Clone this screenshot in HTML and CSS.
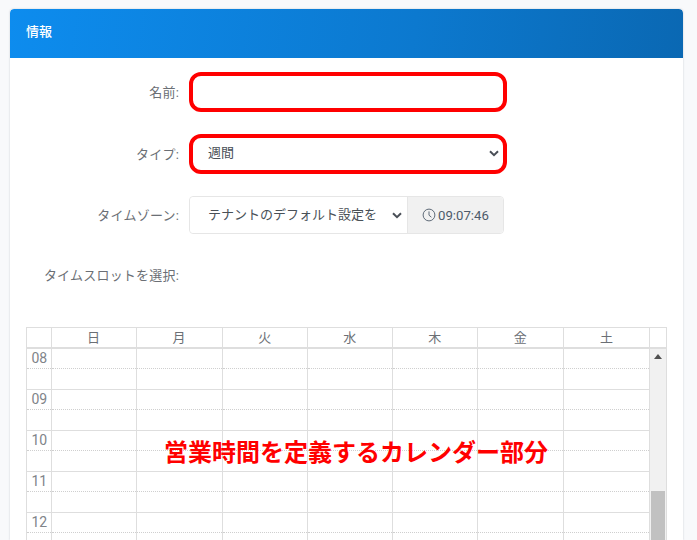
FILE: index.html
```html
<!DOCTYPE html>
<html lang="ja">
<head>
<meta charset="utf-8">
<title>情報</title>
<link rel="stylesheet" href="styles.css">
</head>
<body>
<section class="card">
  <header class="card-head">情報</header>
  <div class="card-body">
    <div class="form-row row-name">
      <label class="form-label">名前:</label>
      <input class="field field-hl" type="text">
    </div>
    <div class="form-row row-type">
      <label class="form-label">タイプ:</label>
      <select class="field field-hl"><option>週間</option></select>
    </div>
    <div class="form-row row-zone">
      <label class="form-label">タイムゾーン:</label>
      <div class="zone-group">
        <select class="zone-select"><option>テナントのデフォルト設定を</option></select>
        <span class="zone-time">
          <svg class="clock" viewBox="0 0 14 14" width="14" height="14"><circle cx="7" cy="7" r="5.9" fill="none" stroke="#5f6b78" stroke-width="1"/><path d="M7 3.4V7.2L9.4 9.2" fill="none" stroke="#5f6b78" stroke-width="1"/></svg>
          09:07:46
        </span>
      </div>
    </div>
    <div class="form-row row-slot">
      <label class="form-label">タイムスロットを選択:</label>
    </div>
    <div class="calendar">
      <div class="cal-head">
        <table class="cal-table">
          <tr><th class="axis"></th><th>日</th><th>月</th><th>火</th><th>水</th><th>木</th><th>金</th><th>土</th></tr>
        </table>
        <div class="head-gutter"></div>
      </div>
      <div class="cal-main">
        <table class="cal-table cal-slots">
          <tr class="half first"><td class="axis">08</td><td></td><td></td><td></td><td></td><td></td><td></td><td></td></tr>
          <tr class="half second"><td class="axis"></td><td></td><td></td><td></td><td></td><td></td><td></td><td></td></tr>
          <tr class="half"><td class="axis">09</td><td></td><td></td><td></td><td></td><td></td><td></td><td></td></tr>
          <tr class="half second"><td class="axis"></td><td></td><td></td><td></td><td></td><td></td><td></td><td></td></tr>
          <tr class="half"><td class="axis">10</td><td></td><td></td><td></td><td></td><td></td><td></td><td></td></tr>
          <tr class="half second"><td class="axis"></td><td></td><td></td><td></td><td></td><td></td><td></td><td></td></tr>
          <tr class="half"><td class="axis">11</td><td></td><td></td><td></td><td></td><td></td><td></td><td></td></tr>
          <tr class="half second"><td class="axis"></td><td></td><td></td><td></td><td></td><td></td><td></td><td></td></tr>
          <tr class="half"><td class="axis">12</td><td></td><td></td><td></td><td></td><td></td><td></td><td></td></tr>
          <tr class="half second"><td class="axis"></td><td></td><td></td><td></td><td></td><td></td><td></td><td></td></tr>
        </table>
        <div class="scrollbar">
          <span class="scroll-up"></span>
          <span class="scroll-thumb"></span>
        </div>
        <div class="cal-note">営業時間を定義するカレンダー部分</div>
      </div>
    </div>
  </div>
</section>
</body>
</html>
```
FILE: styles.css
```css
* { box-sizing: border-box; }
html, body { height: 540px; overflow: hidden; }
body {
  margin: 0;
  padding: 9px 14px 0 10px;
  background: #f8f9fb;
  font-family: Roboto, "Noto Sans CJK JP", sans-serif;
  font-size: 13px;
  color: #6b6f75;
}
.card {
  background: #fff;
  border-radius: 4px 4px 0 0;
  box-shadow: 0 0 2px rgba(60, 70, 90, .28);
  height: 531px;
  overflow: hidden;
}
.card-head {
  height: 49px;
  padding: 0 16px;
  line-height: 46px;
  color: #fff;
  font-weight: 500;
  border-radius: 4px 4px 0 0;
  background: linear-gradient(97deg, #0d8cee 0%, #0c79cf 60%, #0a68b3 100%);
}
.card-body { padding: 0 16px; }
.form-row {
  display: flex;
  align-items: center;
  gap: 10px;
}
.row-name { padding-top: 14px; }
.row-type { padding-top: 22px; }
.row-zone { padding-top: 22px; }
.row-slot { padding-top: 32px; height: 93px; align-items: flex-start; }
.form-label {
  width: 153px;
  text-align: right;
  flex: none;
  position: relative;
  top: -1px;
  letter-spacing: .2px;
}
.row-slot .form-label { line-height: 20px; top: 0; }
.field {
  width: 318px;
  background: #fff;
  font: inherit;
  color: #495057;
  outline: none;
}
.field-hl {
  height: 40px;
  border: 4px solid #f00;
  border-radius: 12px;
  padding: 0 2px 0 15px;
}
select.field-hl, .zone-select {
  appearance: none;
  background-image: url("data:image/svg+xml,%3Csvg xmlns='http://www.w3.org/2000/svg' width='10' height='7' viewBox='0 0 10 7'%3E%3Cpath d='M1 1.2l4 4 4-4' fill='none' stroke='%234a4f57' stroke-width='2'/%3E%3C/svg%3E");
  background-repeat: no-repeat;
}
select.field-hl {
  padding-bottom: 3px;
  background-position: right 4px top 12px;
}
.zone-group {
  display: flex;
  width: 315px;
  height: 38px;
  border: 1px solid #e6e6e6;
  border-radius: 4px;
  background: #fff;
}
.zone-select {
  flex: none;
  width: 217px;
  height: 36px;
  border: 0;
  border-radius: 4px 0 0 4px;
  padding: 0 2px 2px 18px;
  background-color: #fff;
  background-position: right 5px top 15px;
  color: #495057;
  font: inherit;
  outline: none;
}
.zone-time {
  flex: 1;
  display: flex;
  align-items: center;
  gap: 2px;
  padding-left: 14px;
  background: #f1f1f1;
  border-left: 1px solid #e6e6e6;
  border-radius: 0 4px 4px 0;
  color: #4d5b6b;
  font-size: 13.2px;
}
.calendar {
  width: 641px;
  border: 1px solid #dedede;
  border-bottom: 0;
  font-size: 13px;
}
.cal-head {
  display: flex;
  height: 21px;
  border-bottom: 2px solid #dedede;
}
.cal-table {
  flex: none;
  width: 623px;
  table-layout: fixed;
  border-collapse: collapse;
}
.cal-table th, .cal-table td {
  width: 85px;
  padding: 0;
  border-right: 1px solid #dedede;
  font-weight: 400;
  text-align: center;
}
.cal-table th:nth-child(3), .cal-table td:nth-child(3),
.cal-table th:nth-child(7), .cal-table td:nth-child(7),
.cal-table th:nth-child(8), .cal-table td:nth-child(8) { width: 86px; }
.cal-table .axis { width: 24px; }
.cal-head th { height: 19px; line-height: 19px; }
.head-gutter { width: 16px; flex: none; }
.cal-main {
  position: relative;
  display: flex;
  height: 200px;
  overflow: hidden;
}
.cal-slots { align-self: flex-start; }
.half td {
  height: 20px;
  border-bottom: 1px dotted #cfcfcf;
  line-height: 19px;
  vertical-align: top;
}
.half.first td { height: 19px; }
.half.second td { height: 21px; border-bottom: 1px solid #dedede; }
.half .axis { color: #808489; font-size: 14px; padding: 1px 0 0 1px; line-height: 17px; }
.scrollbar {
  position: relative;
  flex: none;
  width: 16px;
  background: #f1f1f1;
}
.scroll-up {
  position: absolute;
  left: 4px;
  top: 5px;
  border: 4px solid transparent;
  border-top: 0;
  border-bottom: 5px solid #505050;
}
.scroll-thumb {
  position: absolute;
  left: 1px;
  right: 1px;
  top: 142px;
  height: 100px;
  background: #c1c1c1;
}
.cal-note {
  position: absolute;
  left: 137px;
  top: 84px;
  color: #f00;
  font-size: 24px;
  font-weight: 700;
  line-height: 36px;
  font-family: "Noto Sans CJK JP", sans-serif;
  white-space: nowrap;
}
```
